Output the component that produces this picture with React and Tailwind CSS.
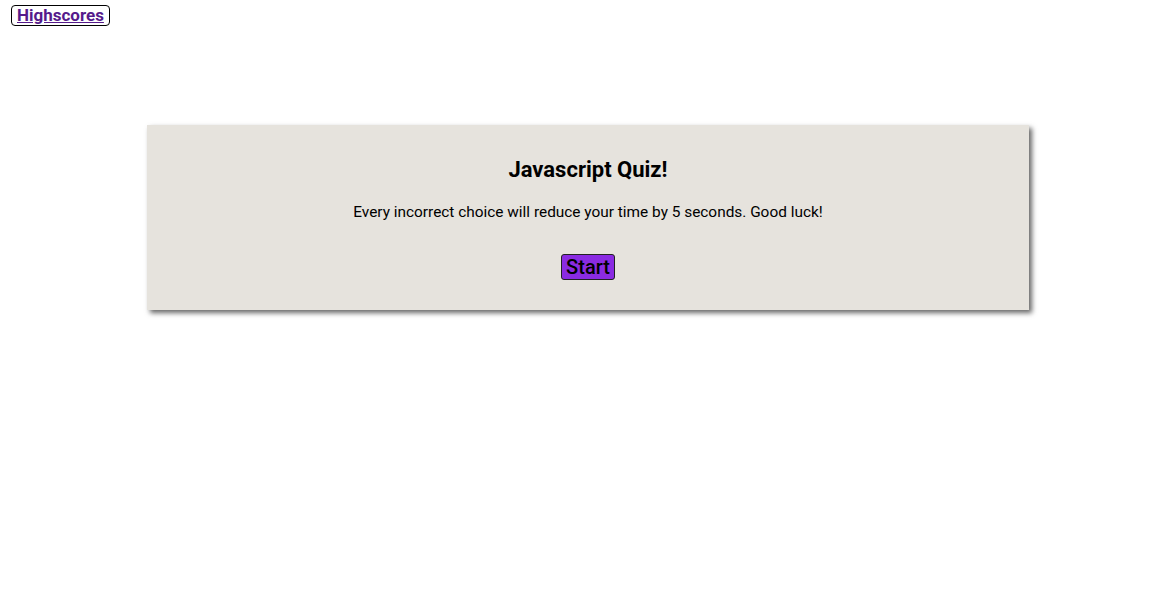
import React from "react";

const App = () => {
  return (
    <div className="min-h-[615px] w-full bg-white text-black font-['Roboto','Liberation_Sans',sans-serif]">
      <header className="px-[11px] pt-[4px]">
        <a
          href="#highscores"
          className="inline-block border border-black rounded-[4px] px-[5px] leading-[19px] text-[17px] font-bold text-[#551a8b] underline"
        >
          Highscores
        </a>
      </header>

      <main className="mt-[97px] w-3/4 mx-auto bg-[#e6e3dd] shadow-[3px_3px_5px_rgba(0,0,0,0.6)] flex flex-col items-center pt-[31px] pb-[30px]">
        <h1 className="text-[22px] font-bold leading-[28px]">Javascript Quiz!</h1>
        <p className="mt-[18px] text-[15.4px] leading-[20px]">
          Every incorrect choice will reduce your time by 5 seconds. Good luck!
        </p>
        <button
          type="button"
          className="mt-[32px] bg-[#8a2be2] border border-[#222] rounded-[3px] px-[4px] text-[20px] font-medium leading-[24px]"
        >
          Start
        </button>
      </main>
    </div>
  );
};

export default App;
